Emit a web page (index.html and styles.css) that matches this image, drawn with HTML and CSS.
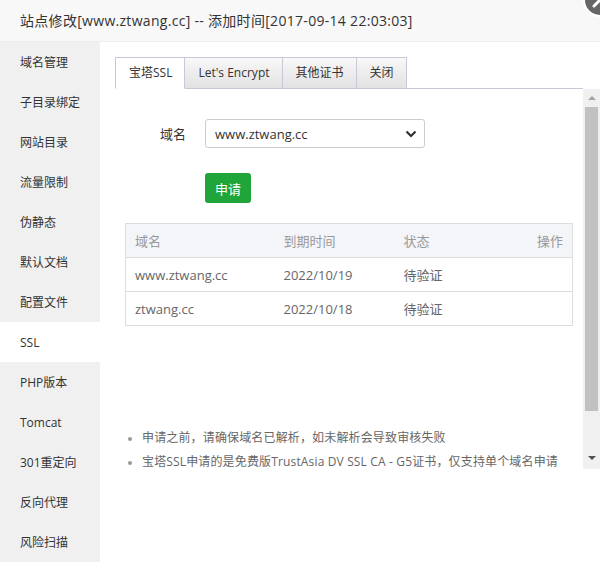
FILE: index.html
```html
<!DOCTYPE html>
<html lang="zh-CN">
<head>
<meta charset="utf-8">
<title>站点修改</title>
<link rel="stylesheet" href="styles.css">
</head>
<body>
<div class="dialog">
  <div class="titlebar">站点修改[www.ztwang.cc] -- 添加时间[2017-09-14 22:03:03]</div>
  <div class="close">
    <svg width="30" height="30" viewBox="0 0 30 30"><path d="M9 9 L21 21 M21 9 L9 21" stroke="#fff" stroke-width="3" stroke-linecap="round"/></svg>
  </div>
  <div class="body">
    <ul class="sidebar">
      <li>域名管理</li>
      <li>子目录绑定</li>
      <li>网站目录</li>
      <li>流量限制</li>
      <li>伪静态</li>
      <li>默认文档</li>
      <li>配置文件</li>
      <li class="active">SSL</li>
      <li>PHP版本</li>
      <li>Tomcat</li>
      <li>301重定向</li>
      <li>反向代理</li>
      <li>风险扫描</li>
    </ul>
    <div class="main">
      <div class="tabs">
        <span class="tab on">宝塔SSL</span>
        <span class="tab">Let's Encrypt</span>
        <span class="tab">其他证书</span>
        <span class="tab">关闭</span>
      </div>
      <div class="pane">
        <div class="content">
          <div class="form-row">
            <label class="label">域名</label>
            <div class="select">
              <span>www.ztwang.cc</span>
              <svg width="12" height="8" viewBox="0 0 12 8"><path d="M1.5 1.5 L6 6 L10.5 1.5" fill="none" stroke="#333" stroke-width="2.2"/></svg>
            </div>
          </div>
          <div class="btn-row"><button class="btn">申请</button></div>
          <table class="grid">
            <thead>
              <tr><th class="c1">域名</th><th class="c2">到期时间</th><th class="c3">状态</th><th class="c4">操作</th></tr>
            </thead>
            <tbody>
              <tr><td>www.ztwang.cc</td><td>2022/10/19</td><td>待验证</td><td></td></tr>
              <tr><td>ztwang.cc</td><td>2022/10/18</td><td>待验证</td><td></td></tr>
            </tbody>
          </table>
          <ul class="tips">
            <li>申请之前，请确保域名已解析，如未解析会导致审核失败</li>
            <li>宝塔SSL申请的是免费版TrustAsia DV SSL CA - G5证书，仅支持单个域名申请</li>
          </ul>
        </div>
        <div class="scrollbar">
          <div class="arrow up"></div>
          <div class="thumb"></div>
          <div class="arrow down"></div>
        </div>
      </div>
    </div>
  </div>
</div>
</body>
</html>
```
FILE: styles.css
```css
* { box-sizing: border-box; }
html, body { margin: 0; padding: 0; background: #fff; }
body {
  font-family: "Open Sans", "Noto Sans CJK SC", sans-serif;
  color: #333;
}
.dialog {
  position: relative;
  width: 600px;
  height: 562px;
  overflow: hidden;
  background: #fff;
}
.titlebar {
  height: 42px;
  line-height: 41px;
  padding-left: 20px;
  font-size: 14px;
  letter-spacing: 0.3px;
  color: #333;
  background: #f8f8f8;
  border-bottom: 1px solid #eee;
}
.close {
  position: absolute;
  right: -15px;
  top: -15px;
  width: 30px;
  height: 30px;
  border-radius: 50%;
  background: #666;
  box-shadow: 0 0 0 2px #fff;
}
.close svg { display: block; }
.body {
  display: flex;
  height: 520px;
}
.sidebar {
  list-style: none;
  margin: 0;
  padding: 0;
  width: 100px;
  background: #f0f0f0;
}
.sidebar li {
  height: 40px;
  line-height: 38px;
  padding-top: 2px;
  padding-left: 20px;
  font-size: 12px;
  color: #333;
}
.sidebar li.active { background: #fff; }
.main {
  flex: 1;
  padding-top: 15px;
  display: flex;
  flex-direction: column;
}
.tabs {
  display: flex;
  margin-left: 15px;
  margin-right: 17px;
  border-bottom: 1px solid #c9c8d8;
  height: 32px;
}
.tab {
  height: 32px;
  line-height: 30px;
  padding: 0 12px 0 13px;
  font-size: 12px;
  color: #333;
  border: 1px solid #c9c8d8;
  border-left: none;
  background: linear-gradient(#f8f8f8, #e2e2e2);
}
.tab:first-child { border-left: 1px solid #c9c8d8; }
.tab.on {
  background: #fff;
  border-bottom: 1px solid #fff;
}
.pane {
  display: flex;
  height: 380px;
}
.content {
  flex: 1;
  padding: 30px 10px 0 25px;
}
.form-row {
  display: flex;
  align-items: center;
  height: 29px;
}
.label {
  width: 80px;
  padding-left: 35px;
  font-size: 13px;
  color: #333;
}
.select {
  width: 220px;
  height: 29px;
  border: 1px solid #ccc;
  border-radius: 3px;
  display: flex;
  align-items: center;
  justify-content: space-between;
  padding: 0 7px 0 9px;
  font-size: 13px;
  color: #333;
}
.select svg { display: block; }
.btn-row {
  padding-left: 80px;
  margin-top: 25px;
}
.btn {
  display: block;
  width: 46px;
  height: 30px;
  border: none;
  border-radius: 3px;
  background: #20a53a;
  color: #fff;
  font-family: "Open Sans", "Noto Sans CJK SC", sans-serif;
  font-size: 13px;
  padding: 0;
}
.grid {
  margin-top: 20px;
  width: 448px;
  border-collapse: collapse;
  border: 1px solid #ddd;
  font-size: 13px;
}
.grid th, .grid td {
  height: 34px;
  padding: 0 9px;
  text-align: left;
  font-weight: normal;
  border-bottom: 1px solid #ddd;
}
.grid th {
  background: #f4f5f9;
  color: #999;
}
.grid td { color: #666; }
.grid .c1 { width: 149px; }
.grid .c2 { width: 120px; }
.grid .c3 { width: 100px; }
.grid .c4 { text-align: right; }
.tips {
  margin: 100px 0 0 0;
  padding-left: 17px;
  font-size: 12px;
  letter-spacing: 0.15px;
  color: #666;
  line-height: 24px;
}
.tips li::marker { color: #999; font-size: 10px; }
.scrollbar {
  width: 17px;
  background: #f0f0f0;
  display: flex;
  flex-direction: column;
  align-items: center;
}
.arrow {
  width: 0;
  height: 0;
  border-left: 4px solid transparent;
  border-right: 4px solid transparent;
}
.arrow.up {
  margin-top: 7px;
  border-bottom: 4px solid #a3a3a3;
}
.arrow.down {
  margin-top: 45px;
  border-top: 4px solid #505050;
}
.thumb {
  margin-top: 7px;
  width: 13px;
  height: 304px;
  background: #c1c1c1;
}
```
